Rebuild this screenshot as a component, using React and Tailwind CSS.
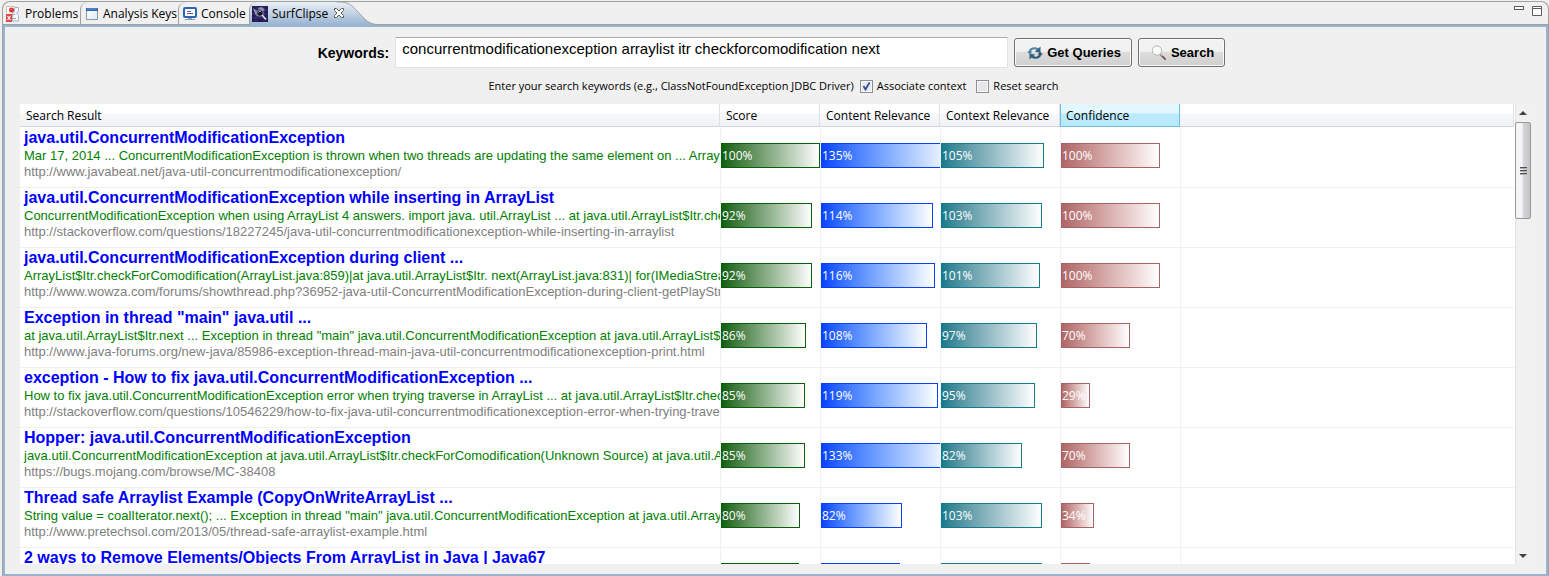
import React from "react";

const results = [
  {
    title: "java.util.ConcurrentModificationException",
    text: "Mar 17, 2014 ... ConcurrentModificationException is thrown when two threads are updating the same element on ... ArrayList",
    url: "http://www.javabeat.net/java-util-concurrentmodificationexception/",
    values: [100, 135, 105, 100],
  },
  {
    title: "java.util.ConcurrentModificationException while inserting in ArrayList",
    text: "ConcurrentModificationException when using ArrayList 4 answers. import java. util.ArrayList ... at java.util.ArrayList$Itr.checkForComodification",
    url: "http://stackoverflow.com/questions/18227245/java-util-concurrentmodificationexception-while-inserting-in-arraylist",
    values: [92, 114, 103, 100],
  },
  {
    title: "java.util.ConcurrentModificationException during client ...",
    text: "ArrayList$Itr.checkForComodification(ArrayList.java:859)|at java.util.ArrayList$Itr. next(ArrayList.java:831)| for(IMediaStream",
    url: "http://www.wowza.com/forums/showthread.php?36952-java-util-ConcurrentModificationException-during-client-getPlayStreams",
    values: [92, 116, 101, 100],
  },
  {
    title: 'Exception in thread "main" java.util ...',
    text: 'at java.util.ArrayList$Itr.next ... Exception in thread "main" java.util.ConcurrentModificationException at java.util.ArrayList$Itr',
    url: "http://www.java-forums.org/new-java/85986-exception-thread-main-java-util-concurrentmodificationexception-print.html",
    values: [86, 108, 97, 70],
  },
  {
    title: "exception - How to fix java.util.ConcurrentModificationException ...",
    text: "How to fix java.util.ConcurrentModificationException error when trying traverse in ArrayList ... at java.util.ArrayList$Itr.checkForComodification",
    url: "http://stackoverflow.com/questions/10546229/how-to-fix-java-util-concurrentmodificationexception-error-when-trying-traverse",
    values: [85, 119, 95, 29],
  },
  {
    title: "Hopper: java.util.ConcurrentModificationException",
    text: "java.util.ConcurrentModificationException at java.util.ArrayList$Itr.checkForComodification(Unknown Source) at java.util.ArrayList",
    url: "https://bugs.mojang.com/browse/MC-38408",
    values: [85, 133, 82, 70],
  },
  {
    title: "Thread safe Arraylist Example (CopyOnWriteArrayList ...",
    text: 'String value = coalIterator.next(); ... Exception in thread "main" java.util.ConcurrentModificationException at java.util.ArrayList',
    url: "http://www.pretechsol.com/2013/05/thread-safe-arraylist-example.html",
    values: [80, 82, 103, 34],
  },
  {
    title: "2 ways to Remove Elements/Objects From ArrayList in Java | Java67",
    text: "",
    url: "",
    values: [79, 80, 103, 29],
  },
];

const barStyles = [
  "border-[#0a5f0a] from-[#0a5f0a]",
  "border-[#0a40f5] from-[#0a40ff]",
  "border-[#147a8c] from-[#147a8c]",
  "border-[#a86464] from-[#ae6666]",
];

function Bar({ value, kind }) {
  return (
    <div
      className={
        "flex h-[25px] items-center border bg-linear-to-r to-white text-xs text-white " +
        barStyles[kind]
      }
      style={{ width: Math.round(value * 0.985) }}
    >
      {value}%
    </div>
  );
}

function ProblemsIcon() {
  return (
    <svg width="16" height="16" viewBox="0 0 16 16">
      <path d="M1.500 7V.500h8V6" fill="#fff" stroke="#cdbfae" />
      <path d="M9.500 1.500h4v4l-2 1 2 3v5.500H7.500V7l2-1z" fill="#f4f8fc" stroke="#a3b6cc" />
      <circle cx="6.500" cy="4" r="2.500" fill="#e0302c" />
      <circle cx="6" cy="3.500" r=".8" fill="#f28b80" />
      <path d="M8 8.500h2M8 12.500h3" stroke="#b39f86" />
      <rect x="1" y="8" width="6" height="8" fill="#df4a48" />
      <path d="M2.500 10l3 4M5.500 10l-3 4" stroke="#fff" strokeWidth="1.200" />
    </svg>
  );
}

function WindowIcon() {
  return (
    <svg width="14" height="14" viewBox="0 0 14 14">
      <defs>
        <linearGradient id="pane" x1="0" y1="0" x2="1" y2="1">
          <stop offset="0" stopColor="#fff" />
          <stop offset="1" stopColor="#d9ebf7" />
        </linearGradient>
      </defs>
      <rect x="1.5" y="1.5" width="11" height="11" fill="url(#pane)" stroke="#8c9a9a" />
      <path d="M1 1h12v3H1z" fill="#2f62ac" />
      <path d="M2 2h10" stroke="#6fa0d8" />
    </svg>
  );
}

function ConsoleIcon() {
  return (
    <svg width="14" height="14" viewBox="0 0 14 14">
      <rect x="1" y="1" width="12" height="9" rx="1" fill="#fff" stroke="#2d65b0" strokeWidth="2" />
      <path d="M4 4.500h4M4 6.500h6" stroke="#50608a" />
      <path d="M5 11h4v1h3v1H2v-1h3z" fill="#8f9dad" />
    </svg>
  );
}

function SurfIcon() {
  return (
    <svg width="16" height="16" viewBox="0 0 16 16">
      <rect width="16" height="16" fill="#221b50" />
      <path d="M0 4h16M0 8h16M0 12h16M4 0v16M12 0v16" stroke="#3f3a85" strokeWidth=".7" />
      <path d="M1 2l4 3 1 6-3-3zM5 2l5-1 3 3-2 1z" fill="#8d91b8" />
      <circle cx="8" cy="7" r="3.3" fill="#15122c" stroke="#8f94ac" />
      <path d="M10 9l4 4.500" stroke="#dfe1ea" strokeWidth="1.600" />
      <path d="M6.500 6.500c.5-1.500 2-1.500 2.600-1" stroke="#fff" fill="none" strokeWidth=".8" />
    </svg>
  );
}

function RefreshIcon() {
  return (
    <svg width="16" height="16" viewBox="0 0 16 16">
      <path d="M2.500 7.500C3 3.500 7.500 2 11 4.500" fill="none" stroke="#4f86a6" strokeWidth="2.200" />
      <path d="M13.500 1.500v6.200L7.800 6.800z" fill="#35617f" />
      <path d="M0 6.500h5.500L3 9.500z" fill="#4f86a6" />
      <path d="M13.500 8.500C13 12.500 8.500 14 5 11.500" fill="none" stroke="#2f5874" strokeWidth="2.200" />
      <path d="M2.500 14.500V8.800l5.700.8z" fill="#35617f" />
      <path d="M16 9.500h-5.500L13 6.800z" fill="#2f5874" />
    </svg>
  );
}

function SearchIcon() {
  return (
    <svg width="16" height="16" viewBox="0 0 16 16">
      <path d="M10 10l4.200 4.200" stroke="#7c5650" strokeWidth="1.800" strokeLinecap="round" />
      <path d="M9.500 9l2 2" stroke="#b9b9b9" strokeWidth="1.500" />
      <circle cx="6" cy="5.500" r="4.700" fill="#f7fbfd" stroke="#b4b5ae" />
      <path d="M3 5.500a3 3 0 0 1 3-3" stroke="#fff" strokeWidth="1.500" fill="none" />
    </svg>
  );
}

function TabBar() {
  const tab = "flex items-center gap-1 rounded-tl-lg border-[#a0a09c] whitespace-nowrap";
  return (
    <div className="flex h-6 shrink-0 items-stretch overflow-hidden rounded-t-lg border border-b-0 border-[#a0a09c] shadow-[inset_0_-1px_0_#a0a09c]">
      <button className={tab + " w-[77px] pl-[2px]"}>
        <ProblemsIcon />
        Problems
      </button>
      <button className={tab + " w-[98px] border-l pl-1"}>
        <WindowIcon />
        Analysis Keys
      </button>
      <button className={tab + " w-[71px] border-l pl-1"}>
        <ConsoleIcon />
        Console
      </button>
      <div className="flex w-[88px] items-center gap-1 rounded-tl-lg border-l border-[#a0a09c] bg-linear-to-b from-[#eaf0f6] to-[#99b4d1] pl-[2px]">
        <SurfIcon />
        <button className="grow text-left">SurfClipse</button>
      </div>
      <div className="relative flex w-12">
        <svg width="48" height="23" viewBox="0 0 48 23" aria-hidden="true">
          <defs>
            <linearGradient id="tabfill" x1="0" y1="0" x2="0" y2="1">
              <stop offset="0" stopColor="#eaf0f6" />
              <stop offset="1" stopColor="#99b4d1" />
            </linearGradient>
          </defs>
          <path d="M0 0H4C13 0 17 6 22 11C27 16 31 22.500 41 22.500V23H0z" fill="url(#tabfill)" />
          <path d="M0 0H4C13 0 17 6 22 11C27 16 31 22.500 41 22.500" fill="none" stroke="#a0a09c" />
        </svg>
        <button aria-label="Close SurfClipse" className="absolute top-[6px] -left-[3px]">
          <svg width="10" height="10" viewBox="0 0 10 10">
            <path d="M.5.500h2L5 3 7.500.500h2v2L7 5l2.500 2.500v2h-2L5 7 2.500 9.500h-2v-2L3 5 .5 2.500z" fill="#fff" stroke="#5c5c5c" />
          </svg>
        </button>
      </div>
      <div className="ml-auto flex items-start gap-2 pt-1 pr-[6px]">
        <button aria-label="Minimize">
          <svg width="10" height="4" viewBox="0 0 10 4">
            <rect x=".5" y=".5" width="9" height="3" fill="#fff" stroke="#5c5c5c" />
          </svg>
        </button>
        <button aria-label="Maximize">
          <svg width="10" height="10" viewBox="0 0 10 10">
            <path d="M.5.500h9v9h-9zM.5 2.500h9" fill="#fff" stroke="#5c5c5c" />
          </svg>
        </button>
      </div>
    </div>
  );
}

function Scrollbar() {
  return (
    <div className="flex w-4 shrink-0 flex-col items-center bg-[#f1f1f1] shadow-[inset_1px_0_0_#e3e3e3]">
      <button aria-label="Scroll up" className="flex h-[18px] w-full items-center justify-center">
        <svg width="8" height="4" viewBox="0 0 8 4"><path d="M0 4l4-4 4 4z" fill="#404040" /></svg>
      </button>
      <div className="flex h-[97px] w-full flex-col items-center justify-center gap-px rounded-[2px] border border-[#979797] bg-linear-to-r from-[#f5f5f5] from-45% via-[#d6d6d9] via-50% to-[#c4c4c8]">
        <span className="h-[2px] w-[7px] border-t border-[#505050] bg-[#b0b0b0]" />
        <span className="h-[2px] w-[7px] border-t border-[#505050] bg-[#b0b0b0]" />
        <span className="h-[2px] w-[7px] border-t border-[#505050] bg-[#b0b0b0]" />
      </div>
      <button aria-label="Scroll down" className="mt-auto flex h-4 w-full items-center justify-center">
        <svg width="8" height="4" viewBox="0 0 8 4"><path d="M0 0l4 4 4-4z" fill="#404040" /></svg>
      </button>
    </div>
  );
}

const headers = ["Search Result", "Score", "Content Relevance", "Context Relevance"];
const headFill =
  "mr-px flex h-[23px] items-center border-r border-b border-r-[#dfe0e3] border-b-[#d5d5d5] bg-linear-to-b from-white from-40% via-[#f7f8fa] via-45% to-[#f1f2f4] pt-[2px] pl-[6px]";

function ResultsTable() {
  return (
    <table className="w-full table-fixed border-separate border-spacing-0">
      <colgroup>
        <col className="w-[701px]" />
        <col className="w-[100px]" />
        <col className="w-[120px]" />
        <col className="w-[120px]" />
        <col className="w-[120px]" />
        <col />
      </colgroup>
      <thead>
        <tr className="h-6 text-left align-top">
          {headers.map((h, i) => (
            <th key={h} className="p-0 font-normal">
              <div className={headFill + (i ? " -ml-px" : "")}>{h}</div>
            </th>
          ))}
          <th className="p-0 font-normal">
            <div className="mr-px -ml-px flex h-[23px] items-center border border-t-0 border-[#70bfe3] bg-linear-to-b from-[#e2f7fe] from-40% via-[#bcecfc] via-45% to-[#b7e7fb] pt-[2px] pl-[5px]">
              Confidence
            </div>
          </th>
          <th className="p-0" aria-label="Filler">
            <div className={headFill + " -ml-px"} />
          </th>
        </tr>
      </thead>
      <tbody>
        {results.map((r) => (
          <tr key={r.title} className="h-[60px]">
            <td className="overflow-hidden border-r border-b border-[#f0f0f0] p-0 pl-1 align-top font-['Liberation_Sans',Arial,sans-serif] whitespace-nowrap">
              <a href={r.url || "#"} className="block h-5 text-base leading-[19px] font-bold text-[#0000ff]">
                {r.title}
              </a>
              <div className="h-4 text-[13px] leading-4 text-[#008000]">{r.text}</div>
              <div className="h-4 text-[13px] leading-4 text-[#808080]">{r.url}</div>
            </td>
            {r.values.map((v, i) => (
              <td key={i} className="overflow-hidden border-r border-b border-[#f0f0f0] p-0 pt-[15px] align-top">
                <Bar value={v} kind={i} />
              </td>
            ))}
            <td className="border-b border-[#f0f0f0] p-0" />
          </tr>
        ))}
      </tbody>
    </table>
  );
}

const button =
  "flex h-[29px] items-center gap-1 rounded-[3px] border border-[#707070] bg-linear-to-b from-[#f2f2f2] from-45% via-[#dddddd] via-50% to-[#cfcfcf] pr-[10px] pl-3 font-['Liberation_Sans',Arial,sans-serif] text-[13px] font-bold whitespace-nowrap shadow-[inset_0_0_0_1px_#fafafa]";

export default function App() {
  return (
    <div className="flex h-screen flex-col overflow-hidden bg-[#f0f0f0] pt-px pl-[2px] font-['Open_Sans','Segoe_UI',sans-serif] text-xs text-black">
      <TabBar />
      <main className="flex min-h-0 grow flex-col border-x border-[#a0a09c]">
        <div className="flex min-h-0 grow flex-col border-2 border-[#99b4d1] px-[15px] pt-[10px] pb-[10px]">
          <div className="flex shrink-0 items-center justify-center gap-[6px] pr-2">
            <label htmlFor="keywords" className="font-['Liberation_Sans',Arial,sans-serif] text-sm leading-5 font-bold">
              Keywords:
            </label>
            <input
              id="keywords"
              className="h-[31px] w-[613px] border border-[#e2e3ea] border-t-[#abadb3] bg-white px-[6px] pb-2 font-['Liberation_Sans',Arial,sans-serif] text-[15px] outline-none"
              defaultValue="concurrentmodificationexception arraylist itr checkforcomodification next"
            />
            <button className={button}>
              <RefreshIcon />
              Get Queries
            </button>
            <button className={button}>
              <SearchIcon />
              Search
            </button>
          </div>
          <div className="flex h-9 shrink-0 items-center justify-center gap-[10px] pr-1 text-[11px]">
            <div className="flex items-center gap-[6px]">
              <span>Enter your search keywords (e.g., ClassNotFoundException JDBC Driver)</span>
              <label className="flex items-center gap-1">
                <input
                  type="checkbox"
                  defaultChecked
                  className="size-[13px] appearance-none border border-[#8e8f8f] bg-[#e9ebee] shadow-[inset_0_0_0_1px_#f8f8f8] checked:bg-[url('data:image/svg+xml,%3Csvg%20xmlns=%22http://www.w3.org/2000/svg%22%20viewBox=%220%200%2011%2011%22%3E%3Cpath%20d=%22M2.500%205l2%203.500L8.500%201.500%22%20fill=%22none%22%20stroke=%22%23354f9c%22%20stroke-width=%221.800%22/%3E%3C/svg%3E')]"
                />
                Associate context
              </label>
            </div>
            <label className="flex items-center gap-1">
              <input
                type="checkbox"
                className="size-[13px] appearance-none border border-[#8e8f8f] bg-[#e4e6e9] shadow-[inset_0_0_0_1px_#f8f8f8]"
              />
              Reset search
            </label>
          </div>
          <div className="flex min-h-0 grow">
            <div className="min-w-0 grow overflow-hidden bg-white">
              <ResultsTable />
            </div>
            <Scrollbar />
          </div>
        </div>
      </main>
    </div>
  );
}
